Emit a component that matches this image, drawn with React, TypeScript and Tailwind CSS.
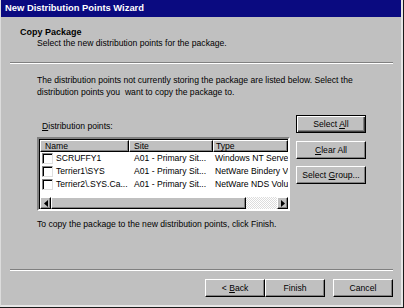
const raised =
  "bg-[#c0c0c0] border border-t-white border-l-white border-r-black border-b-black shadow-[inset_-1px_-1px_0_#808080]";

function Btn({
  children,
  isDefault = false,
  wide = false,
}: {
  children: React.ReactNode;
  isDefault?: boolean;
  wide?: boolean;
}) {
  const frame = isDefault
    ? "bg-[#c0c0c0] border border-black shadow-[inset_1px_1px_0_#fff,inset_-1px_-1px_0_#404040,inset_-2px_-2px_0_#808080]"
    : raised;
  return (
    <div
      className={`h-[18px] ${wide ? "w-[70px]" : "w-[60px]"} flex items-center justify-center text-[8.6px] leading-none text-black whitespace-nowrap ${frame}`}
    >
      {children}
    </div>
  );
}

const rows = [
  { name: "SCRUFFY1", site: "A01 - Primary Sit...", type: "Windows NT Server" },
  { name: "Terrier1\\SYS", site: "A01 - Primary Sit...", type: "NetWare Bindery Volume" },
  { name: "Terrier2\\.SYS.Ca...", site: "A01 - Primary Sit...", type: "NetWare NDS Volume" },
];

function Arrow({ dir }: { dir: "left" | "right" }) {
  return (
    <div className={`w-[11px] h-[12px] flex items-center justify-center ${raised}`}>
      <svg width="4" height="7" viewBox="0 0 4 7">
        {dir === "left" ? <path d="M4 0 L0 3.5 L4 7 Z" fill="#000" /> : <path d="M0 0 L4 3.5 L0 7 Z" fill="#000" />}
      </svg>
    </div>
  );
}

export default function App() {
  return (
    <div className="w-[404px] h-[308px] border-r border-b border-[#1a1a1a] bg-[#c0c0c0] font-['Liberation_Sans',Arial,sans-serif] text-[8.6px] text-black overflow-hidden">
      <div className="h-full border-l border-l-[#dcdcdc] border-r-2 border-b-2 border-r-[#e6e6e6] border-b-[#e6e6e6] flex flex-col">
        <div className="h-[17px] shrink-0 bg-[#0a0a80] flex items-center pl-[4px] text-white font-bold text-[9.4px]">
          New Distribution Points Wizard
        </div>

        <div className="flex flex-col">
          <div className="ml-[19px] mt-[10px] text-[9px] font-bold leading-[11px]">Copy Package</div>
          <div className="ml-[36px] leading-[11px]">Select the new distribution points for the package.</div>
          <div className="ml-[9px] mr-[8px] mt-[13px] border-t border-t-[#808080] border-b border-b-white" />

          <p className="ml-[36px] mt-[10px] leading-[12px] whitespace-pre">
            {"The distribution points not currently storing the package are listed below. Select the"}
            <br />
            {"distribution points you  want to copy the package to."}
          </p>

          <div className="flex mt-[17px]">
            <div className="ml-[36px] w-[253px] flex flex-col">
              <div className="ml-[5px] mt-[5px] leading-[12px]">
                <span className="underline">D</span>istribution points:
              </div>
              <div className="mt-[5px] h-[74px] border-2 border-t-[#808080] border-l-[#808080] border-r-white border-b-white">
                <div className="h-full bg-white shadow-[inset_1px_1px_0_#000] flex flex-col overflow-hidden pl-[1px] pt-[1px]">
                  <div className="flex h-[12px] shrink-0 leading-none">
                    <div className={`w-[89px] h-full flex items-center pl-[4px] ${raised}`}>Name</div>
                    <div className={`w-[84px] h-full flex items-center pl-[4px] ${raised}`}>Site</div>
                    <div className={`flex-1 h-full flex items-center pl-[2px] ${raised}`}>Type</div>
                  </div>
                  {rows.map((r) => (
                    <div key={r.name} className="flex h-[13px] items-center shrink-0 whitespace-nowrap">
                      <div className="w-[89px] flex items-center">
                        <div className="ml-[2px] w-[11px] h-[11px] border border-t-[#808080] border-l-[#808080] border-r-[#dfdfdf] border-b-[#dfdfdf] shadow-[inset_1px_1px_0_#000] bg-white" />
                        <span className="ml-[3px]">{r.name}</span>
                      </div>
                      <div className="w-[84px] pl-[5px]">{r.site}</div>
                      <div className="flex-1 pl-[2px] overflow-hidden">{r.type}</div>
                    </div>
                  ))}
                  <div className="flex-1" />
                  <div className="flex h-[12px] shrink-0">
                    <Arrow dir="left" />
                    <div className={`w-[195px] h-full ${raised}`} />
                    <div className="flex-1 h-full bg-[repeating-conic-gradient(#dcdcdc_0%_25%,#ffffff_0%_50%)] bg-[length:2px_2px]" />
                    <Arrow dir="right" />
                  </div>
                </div>
              </div>
            </div>

            <div className="ml-[6px] flex flex-col">
              <Btn isDefault wide>
                <span>
                  Select <span className="underline">A</span>ll
                </span>
              </Btn>
              <div className="mt-[8px]">
                <Btn wide>
                  <span>
                    <span className="underline">C</span>lear All
                  </span>
                </Btn>
              </div>
              <div className="mt-[7px]">
                <Btn wide>
                  <span>
                    Select <span className="underline">G</span>roup...
                  </span>
                </Btn>
              </div>
            </div>
          </div>

          <div className="ml-[36px] mt-[7px] leading-[12px]">
            To copy the package to the new distribution points, click Finish.
          </div>

          <div className="ml-[9px] mr-[8px] mt-[39px] border-t border-t-[#808080] border-b border-b-white" />

          <div className="flex justify-end mr-[8px] mt-[8px]">
            <Btn>
              <span>
                &lt; <span className="underline">B</span>ack
              </span>
            </Btn>
            <Btn>Finish</Btn>
            <div className="ml-[8px]">
              <Btn>Cancel</Btn>
            </div>
          </div>
        </div>
      </div>
    </div>
  );
}
